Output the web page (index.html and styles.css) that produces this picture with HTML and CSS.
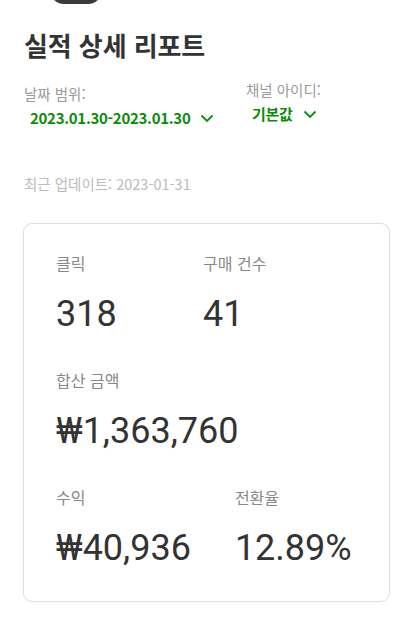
FILE: index.html
```html
<!DOCTYPE html>
<html lang="ko">
<head>
<meta charset="utf-8">
<link rel="stylesheet" href="styles.css">
</head>
<body>
<div class="top-blob"></div>
<main class="page">
  <h1 class="title">실적 상세 리포트</h1>
  <div class="filters">
    <div class="filter filter-date">
      <div class="filter-label">날짜 범위:</div>
      <div class="filter-value">2023.01.30-2023.01.30
        <svg class="chev" width="14" height="9" viewBox="0 0 14 9"><path d="M1.5 1.5 L7 7 L12.5 1.5" fill="none" stroke="#0a8c0a" stroke-width="1.8"/></svg>
      </div>
    </div>
    <div class="filter filter-channel">
      <div class="filter-label">채널 아이디:</div>
      <div class="filter-value">기본값
        <svg class="chev" width="14" height="9" viewBox="0 0 14 9"><path d="M1.5 1.5 L7 7 L12.5 1.5" fill="none" stroke="#0a8c0a" stroke-width="1.8"/></svg>
      </div>
    </div>
  </div>
  <p class="updated">최근 업데이트: 2023-01-31</p>
  <section class="card">
    <div class="row">
      <div class="stat"><div class="stat-label">클릭</div><div class="stat-value">318</div></div>
      <div class="stat"><div class="stat-label">구매 건수</div><div class="stat-value">41</div></div>
    </div>
    <div class="row">
      <div class="stat"><div class="stat-label">합산 금액</div><div class="stat-value">₩1,363,760</div></div>
    </div>
    <div class="row">
      <div class="stat"><div class="stat-label">수익</div><div class="stat-value">₩40,936</div></div>
      <div class="stat"><div class="stat-label">전환율</div><div class="stat-value">12.89%</div></div>
    </div>
  </section>
</main>
</body>
</html>
```
FILE: styles.css
```css
html, body {
  margin: 0;
  padding: 0;
  background: #fff;
}
body {
  position: relative;
  font-family: "Noto Sans CJK KR", "Noto Sans", sans-serif;
  color: #333;
}
.top-blob {
  position: absolute;
  left: 50px;
  top: -20px;
  width: 52px;
  height: 24px;
  background: #3a3a3a;
  border-radius: 0 0 14px 14px;
  filter: blur(0.6px);
}
.page {
  padding: 26px 24px 0 24px;
}
.title {
  margin: 0;
  font-size: 26px;
  font-weight: 700;
  line-height: 38px;
  color: #333;
  letter-spacing: -0.1px;
}
.filters {
  display: flex;
  margin-top: 20px;
}
.filter-date {
  width: 222px;
}
.filter-channel {
  margin-top: -4px;
}
.filter-label {
  font-size: 14.5px;
  line-height: 20px;
  color: #999;
  font-weight: 400;
}
.filter-value {
  display: flex;
  align-items: center;
  margin-top: 3px;
  padding-left: 6px;
  font-size: 15px;
  line-height: 22px;
  font-weight: 700;
  color: #0a8c0a;
  letter-spacing: -0.3px;
}
.chev {
  margin-left: 10px;
  margin-top: 1px;
}
.updated {
  margin: 45px 0 0 0;
  font-size: 14.5px;
  line-height: 20px;
  color: #bbb;
}
.card {
  margin-top: 29px;
  width: 367px;
  box-sizing: border-box;
  border: 1px solid #ddd;
  border-radius: 9px;
  padding: 27px 32px 32px 32px;
  margin-left: -1px;
}
.row {
  display: flex;
  margin-bottom: 33px;
}
.row:last-child {
  margin-bottom: 0;
}
.stat {
  flex-shrink: 0;
  min-width: 103px;
  margin-right: 44px;
}
.stat:last-child {
  margin-right: 0;
}
.stat-label {
  font-size: 16px;
  line-height: 24px;
  color: #888;
  font-weight: 400;
}
.stat-value {
  margin-top: 18px;
  font-family: Roboto, "Noto Sans", sans-serif;
  font-size: 36px;
  line-height: 42px;
  color: #333;
  white-space: nowrap;
}
```
